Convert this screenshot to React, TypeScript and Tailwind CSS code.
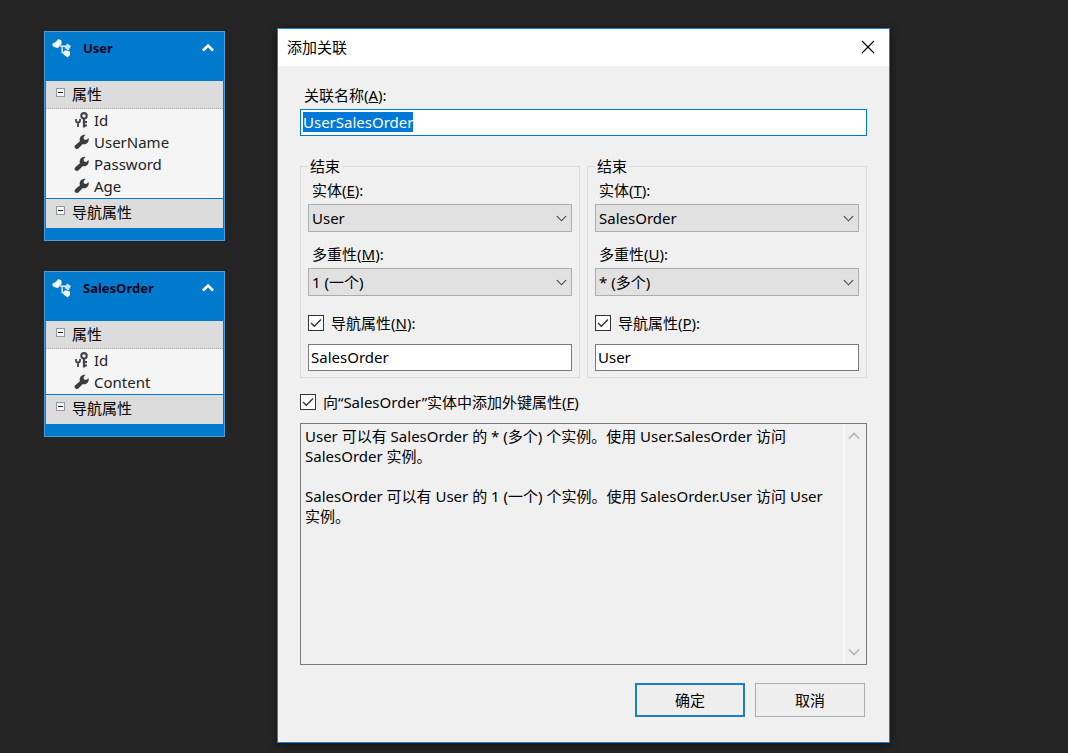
import { useEffect, useRef } from 'react';
import type { ReactNode } from 'react';

function EntityIcon() {
  return (
    <svg className="size-5" viewBox="0 0 20 20" aria-hidden="true">
      <path d="M6.5 1 L9.5 2.5 L9.5 6 L6 10 L3.5 9.5 L0.5 8 L0.5 5.5 L3 4.5 Z" fill="#f4f9fe" />
      <path d="M8 8.2 H14 M10.2 8 V14.5 H14" fill="none" stroke="#cfe5f7" strokeWidth="1.6" />
      <path d="M15 5.5 L19 8 L16.5 12.5 L12.5 10 Z" fill="#cfe5f7" />
      <path d="M13 12 L18 13.5 L18 17 L15.5 19.5 L11 16 Z" fill="#f4f9fe" />
    </svg>
  );
}

function KeyIcon() {
  return (
    <svg className="size-4 shrink-0" viewBox="0 0 16 16" fill="none" stroke="#444" aria-hidden="true">
      <circle cx="10" cy="3.8" r="2.7" strokeWidth="2.1" />
      <path d="M10 6.5 V15.5" strokeWidth="2.2" />
      <path d="M10 10 H13 M10 13.5 H13" strokeWidth="2" />
      <path d="M2 7 V8.5 Q2 10.5 4 10.5 Q6 10.5 6 8.5 V7 M4 10.5 V15" strokeWidth="1.8" />
    </svg>
  );
}

function WrenchIcon() {
  return (
    <svg className="size-4 shrink-0" viewBox="0 0 16 16" aria-hidden="true">
      <path
        d="M11.6 0.8 L9.6 3.2 L10 5.6 L12.2 6 L14.6 4 C15.2 6.8 14 9.2 11.8 10 C10.6 10.4 9.6 10.2 8.8 9.9 L4.6 14.2 C3.7 15.1 2.1 15.1 1.2 14.2 C0.3 13.3 0.4 12 1.3 11.2 L5.9 7.2 C5.2 4.8 6 2.5 7.9 1.4 C9.1 0.7 10.5 0.5 11.6 0.8 Z"
        fill="#3c3c3c"
      />
    </svg>
  );
}

function Chevron({ up = false, className }: { up?: boolean; className: string }) {
  return (
    <svg className={className} viewBox="0 0 12 12" fill="none" stroke="currentColor" aria-hidden="true">
      <path d={up ? 'M1 8.5 L6 3.5 L11 8.5' : 'M1 3.5 L6 8.5 L11 3.5'} />
    </svg>
  );
}

function SectionToggle({ title }: { title: string }) {
  return (
    <button type="button" className="flex h-[27px] w-full items-start gap-[7px] pt-[3px] pl-2.5 text-left">
      <svg className="mt-1 size-[9px]" viewBox="0 0 9 9" aria-hidden="true">
        <rect x="0.5" y="0.5" width="8" height="8" fill="#f4f4f4" stroke="#8f9aa5" />
        <path d="M2 4.5 H7" stroke="#222" />
      </svg>
      {title}
    </button>
  );
}

function EntityCard({ name, properties }: { name: string; properties: string[] }) {
  return (
    <article className="border border-[#4d9fdc] bg-[#007acc] px-px pb-3 text-black">
      <header className="flex h-[49px] items-start justify-between pt-1.5 pr-[9px] pl-1.5">
        <div className="flex gap-[11px]">
          <EntityIcon />
          <h2 className="text-[13px] leading-5 font-bold text-[#06061c]">{name}</h2>
        </div>
        <button type="button" aria-label="折叠" className="flex h-5 items-center text-white">
          <Chevron up className="size-3 [&_path]:stroke-[2.5]" />
        </button>
      </header>
      <div className="border-b border-dotted border-[#a8a8a8] bg-[#dcdcdc]">
        <SectionToggle title="属性" />
      </div>
      <ul className="bg-[#f5f5f5] pb-px">
        {properties.map((p) => (
          <li key={p} className="flex h-[22px] items-center gap-1 pl-7">
            {p === 'Id' ? <KeyIcon /> : <WrenchIcon />}
            <span className="text-[#222]">{p}</span>
          </li>
        ))}
      </ul>
      <div className="border-t border-[#007acc] bg-[#dcdcdc] pb-0.5">
        <SectionToggle title="导航属性" />
      </div>
    </article>
  );
}

function Check({ id, children }: { id: string; children: ReactNode }) {
  return (
    <div className="flex h-5 items-center gap-[7px]">
      <span className="grid size-4">
        <input
          id={id}
          type="checkbox"
          defaultChecked
          className="peer col-start-1 row-start-1 size-4 appearance-none border border-[#333] bg-white"
        />
        <svg
          className="pointer-events-none invisible col-start-1 row-start-1 size-4 peer-checked:visible"
          viewBox="0 0 16 16"
          fill="none"
          stroke="#333"
          strokeWidth="1.4"
          aria-hidden="true"
        >
          <path d="M3 8 L6.3 11.3 L13 4.5" />
        </svg>
      </span>
      <label htmlFor={id}>{children}</label>
    </div>
  );
}

function Combo({ id, value, options }: { id: string; value: string; options: string[] }) {
  return (
    <div className="mt-1 grid items-center">
      <select
        id={id}
        defaultValue={value}
        className="col-start-1 row-start-1 h-7 w-full appearance-none border border-[#adadad] bg-[#e1e1e1] pl-[3px]"
      >
        {options.map((o) => (
          <option key={o}>{o}</option>
        ))}
      </select>
      <Chevron className="pointer-events-none col-start-1 row-start-1 mr-[5px] size-[11px] justify-self-end text-[#444] [&_path]:stroke-[1.2]" />
    </div>
  );
}

interface EndProps {
  side: string;
  entity: string;
  entityKey: string;
  multiplicity: string;
  multiplicityKey: string;
  navigation: string;
  navigationKey: string;
}

function AssociationEnd(p: EndProps) {
  return (
    <fieldset className="min-w-0 border border-[#dcdcdc] px-[7px] pb-1.5">
      <legend className="px-0.5 leading-5">结束</legend>
      <label htmlFor={p.side + '-entity'} className="mt-1 block pl-1 leading-5">
        实体(<u>{p.entityKey}</u>):
      </label>
      <Combo id={p.side + '-entity'} value={p.entity} options={['User', 'SalesOrder']} />
      <label htmlFor={p.side + '-mult'} className="mt-3 block pl-1 leading-5">
        多重性(<u>{p.multiplicityKey}</u>):
      </label>
      <Combo id={p.side + '-mult'} value={p.multiplicity} options={['1 (一个)', '* (多个)']} />
      <div className="mt-[17px] mb-[11px]">
        <Check id={p.side + '-nav'}>
          导航属性(<u>{p.navigationKey}</u>):
        </Check>
      </div>
      <input
        aria-label="导航属性"
        defaultValue={p.navigation}
        className="block h-[27px] w-full border border-[#7a7a7a] bg-white px-0.5 pb-0.5"
      />
    </fieldset>
  );
}

const summary = `User 可以有 SalesOrder 的 * (多个) 个实例。使用 User.SalesOrder 访问 SalesOrder 实例。

SalesOrder 可以有 User 的 1 (一个) 个实例。使用 SalesOrder.User 访问 User 实例。`;

export default function App() {
  const nameRef = useRef<HTMLInputElement>(null);

  useEffect(() => {
    nameRef.current?.focus();
    nameRef.current?.select();
  }, []);

  return (
    <main className="flex min-h-screen items-start gap-[52px] bg-[#252526] pt-7 pl-11 font-['Noto_Sans','Noto_Sans_CJK_SC',sans-serif] text-[15px] leading-5 text-black">
      <div className="flex w-[181px] shrink-0 flex-col gap-[30px] pt-[3px]">
        <EntityCard name="User" properties={['Id', 'UserName', 'Password', 'Age']} />
        <EntityCard name="SalesOrder" properties={['Id', 'Content']} />
      </div>

      <section
        role="dialog"
        aria-labelledby="dialog-title"
        className="w-full max-w-[613px] border border-[#1883d7] bg-[#f0f0f0] shadow-[0_2px_8px_rgba(0,0,0,0.6)]"
      >
        <header className="flex h-[37px] items-center justify-between bg-white pr-3.5 pb-0.5 pl-[9px]">
          <h1 id="dialog-title">添加关联</h1>
          <button type="button" aria-label="关闭">
            <svg className="size-3.5" viewBox="0 0 14 14" fill="none" stroke="#000" strokeWidth="1.1" aria-hidden="true">
              <path d="M1 1 L13 13 M13 1 L1 13" />
            </svg>
          </button>
        </header>

        <form className="px-[22px] pt-[19px] pb-[25px]" onSubmit={(e) => e.preventDefault()}>
          <label htmlFor="assoc-name" className="block pl-1">
            关联名称(<u>A</u>):
          </label>
          <input
            id="assoc-name"
            ref={nameRef}
            defaultValue="UserSalesOrder"
            className="mt-1 block h-[27px] w-full border border-[#0078d7] bg-white px-0.5 pb-0.5 outline-none selection:bg-[#0078d7] selection:text-white"
          />

          <div className="mt-5 grid grid-cols-2 gap-[7px]">
            <AssociationEnd
              side="left"
              entity="User"
              entityKey="E"
              multiplicity="1 (一个)"
              multiplicityKey="M"
              navigation="SalesOrder"
              navigationKey="N"
            />
            <AssociationEnd
              side="right"
              entity="SalesOrder"
              entityKey="T"
              multiplicity="* (多个)"
              multiplicityKey="U"
              navigation="User"
              navigationKey="P"
            />
          </div>

          <div className="mt-3.5">
            <Check id="foreign-key">
              向“SalesOrder”实体中添加外键属性(<u>F</u>)
            </Check>
          </div>

          <div className="mt-[11px] flex h-[242px] border border-[#7a7a7a]">
            <textarea
              aria-label="关联说明"
              readOnly
              defaultValue={summary}
              className="min-w-0 flex-1 resize-none overflow-hidden pt-0.5 pr-2 pl-1 leading-5 outline-none"
            />
            <div className="flex w-[23px] flex-col items-center justify-between border-l-2 border-[#fafafa] py-1.5 pr-[3px] text-[#b4b4b4]">
              <Chevron up className="size-3 [&_path]:stroke-[1.6]" />
              <Chevron className="size-3 [&_path]:stroke-[1.6]" />
            </div>
          </div>

          <div className="mt-[18px] flex justify-end gap-2.5 pr-0.5">
            <button type="submit" className="h-[34px] w-[110px] border-2 border-[#1a7fc0] bg-[#eeeeee]">
              确定
            </button>
            <button type="button" className="h-[34px] w-[110px] border border-[#adadad] bg-[#eeeeee]">
              取消
            </button>
          </div>
        </form>
      </section>
    </main>
  );
}
